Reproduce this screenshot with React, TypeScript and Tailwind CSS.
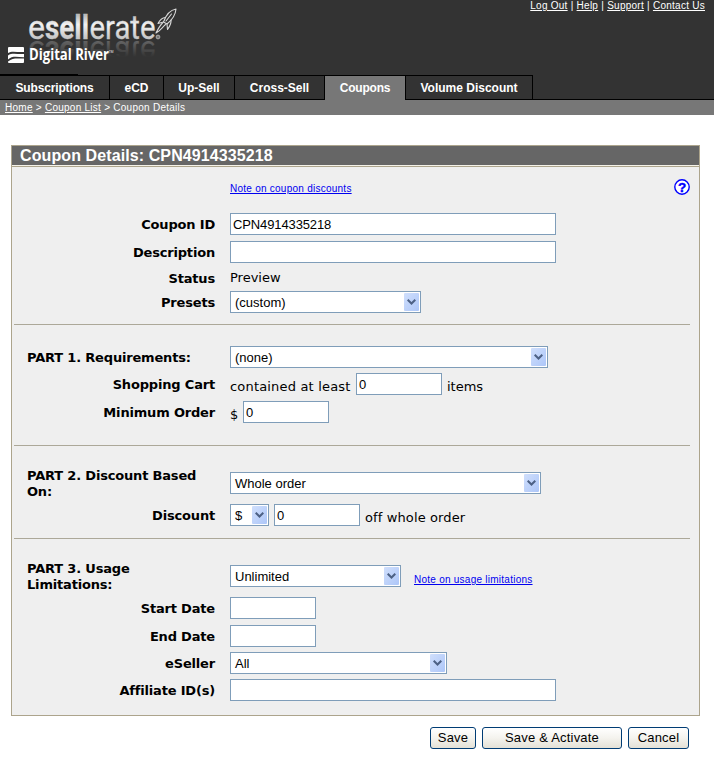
import type { ReactNode } from "react";

const VERDANA = "font-['DejaVu_Sans',sans-serif]";
const ARIAL = "font-['Liberation_Sans',sans-serif]";

function Wordmark() {
  return (
    <>
      <text x="28" y="39" textLength="17" lengthAdjust="spacingAndGlyphs">e</text>
      <text x="45" y="39" fontWeight="700" textLength="44" lengthAdjust="spacingAndGlyphs">sell</text>
      <text x="89.500" y="39" textLength="66" lengthAdjust="spacingAndGlyphs">erate</text>
    </>
  );
}

function Logo() {
  return (
    <svg width="190" height="74" viewBox="0 0 190 74" className="block" role="img" aria-label="esellerate, Digital River">
      <defs>
        <linearGradient id="silver" gradientUnits="userSpaceOnUse" x1="0" y1="15" x2="0" y2="39">
          <stop offset="0" stopColor="#b9b9b9" />
          <stop offset="0.4" stopColor="#f2f2f2" />
          <stop offset="1" stopColor="#c4c4c4" />
        </linearGradient>
        <linearGradient id="mirror" gradientUnits="userSpaceOnUse" x1="0" y1="39" x2="0" y2="23">
          <stop offset="0" stopColor="#fff" stopOpacity="0.24" />
          <stop offset="1" stopColor="#fff" stopOpacity="0" />
        </linearGradient>
      </defs>
      <g fontFamily="Roboto, sans-serif" fontSize="33" fill="url(#silver)" stroke="url(#silver)" strokeWidth="0.3">
        <Wordmark />
      </g>
      <g fontFamily="Roboto, sans-serif" fontSize="33" fill="url(#mirror)" transform="matrix(1 0 0 -1 0 80)" aria-hidden="true">
        <Wordmark />
      </g>
      <circle cx="158" cy="37" r="1.9" fill="#777" stroke="#bbb" strokeWidth="0.8" />
      <g fill="none" stroke="#d8d8d8" strokeWidth="1.1" strokeLinejoin="round" strokeLinecap="round">
        <path d="M176 9 C170 10 166 15 163.5 22 L167 24 C172 20 175.500 15 176 9 Z" />
        <path d="M165.500 17.500 C161 18 159.500 20.500 158 23.500 L163.500 22" />
        <path d="M171 20 C171.500 24 169.500 26.500 167.500 29.500 L167 24" />
        <path d="M162.500 23 C160 25.500 158.500 28 156 33 C160.500 30.500 162 27.500 165.500 24.500" />
        <path d="M166 21 L171.500 14" />
      </g>
      <rect x="8" y="47" width="16" height="16" rx="1" fill="#fff" />
      <path d="M8 53 C12 50.500 17 52.500 24 52 L24 54 C17 54.500 12 52.500 8 55.500 Z M8 59.500 C12 55.500 17 57 24 57.200 L24 58.600 C17 58.500 13 57.500 8 61.500 Z" fill="#333" />
      <text x="29" y="60" fontFamily="'Open Sans', sans-serif" fontSize="15.5" fontWeight="700" fill="#fff" textLength="80" lengthAdjust="spacingAndGlyphs">Digital River</text>
      <text x="109" y="53" fontFamily="'Open Sans', sans-serif" fontSize="3" fill="#fff">TM</text>
    </svg>
  );
}

function TopLink({ children }: { children: ReactNode }) {
  return <a className="underline decoration-1 underline-offset-1">{children}</a>;
}

function Tab({ children, className }: { children: ReactNode; className: string }) {
  return (
    <div className={`flex h-[25px] shrink-0 items-center justify-center border-t border-r border-black whitespace-nowrap ${className}`}>
      {children}
    </div>
  );
}

function Row({ label, className, labelClass = "pr-[15px] text-right", children }: {
  label?: string;
  className: string;
  labelClass?: string;
  children?: ReactNode;
}) {
  return (
    <div className={`flex h-[22px] items-center ${className}`}>
      <div className={`w-[218px] shrink-0 pt-[2px] leading-4 font-bold tracking-[-0.18px] ${labelClass}`}>{label}</div>
      {children}
    </div>
  );
}

function Field({ value = "", className }: { value?: string; className: string }) {
  return (
    <input
      defaultValue={value}
      className={`h-[22px] shrink-0 border border-[#7f9db9] bg-white px-[2px] pt-px text-[13px] tracking-[-0.12px] outline-none ${ARIAL} ${className}`}
    />
  );
}

function Select({ value, className }: { value: string; className: string }) {
  return (
    <div className={`flex h-[22px] shrink-0 items-center justify-between border border-[#7f9db9] bg-white pr-px pl-1 ${ARIAL} ${className}`}>
      <span className="pt-[2px]">{value}</span>
      <span className="flex h-[18px] w-[15px] items-center justify-center rounded-[1px] bg-linear-to-br from-[#d0dffc] to-[#adc6f8]">
        <svg width="9" height="6" viewBox="0 0 9 6" fill="none" stroke="#4d6185" strokeWidth="2">
          <path d="M0.700 0.700 L4.500 4.500 L8.300 0.700" />
        </svg>
      </span>
    </div>
  );
}

function Rule({ className }: { className: string }) {
  return <div className={`mr-[9px] ml-[2px] h-px bg-[#aca899] ${className}`} />;
}

function NoteLink({ children, className }: { children: ReactNode; className: string }) {
  return <a className={`text-[10px] tracking-[0.25px] text-[#0000f0] underline ${ARIAL} ${className}`}>{children}</a>;
}

function PushButton({ children, className }: { children: ReactNode; className: string }) {
  return (
    <button className={`h-[22px] rounded-[3px] border border-[#003c74] bg-linear-to-b from-white via-[#f4f3ee] to-[#e4e1d6] pb-px text-[13px] leading-none tracking-[0.2px] ${className}`}>
      {children}
    </button>
  );
}

export default function App() {
  return (
    <div className={`h-[762px] w-[714px] overflow-hidden bg-white text-[13px] text-black ${VERDANA}`}>
      <header className="bg-[#333]">
        <div className="flex h-[74px] items-start justify-between">
          <Logo />
          <div className={`mr-[9px] text-[10px] leading-3 tracking-[0.26px] whitespace-nowrap text-white ${ARIAL}`}>
            <TopLink>Log Out</TopLink> | <TopLink>Help</TopLink> | <TopLink>Support</TopLink> | <TopLink>Contact Us</TopLink>
          </div>
        </div>
        <div className="h-px w-[78px] bg-black" />
        <nav className={`flex h-[25px] text-[12px] font-bold text-white ${ARIAL}`}>
          <Tab className="w-[110px] border-b tracking-[-0.15px]">Subscriptions</Tab>
          <Tab className="w-[54px] border-b">eCD</Tab>
          <Tab className="w-[71px] border-b">Up-Sell</Tab>
          <Tab className="w-[90px] border-b">Cross-Sell</Tab>
          <Tab className="w-[81px] bg-[#777] tracking-[-0.2px]">Coupons</Tab>
          <Tab className="w-[127px] border-b">Volume Discount</Tab>
          <div className="flex-1 border-b border-black" />
        </nav>
      </header>
      <div className={`h-[15px] bg-[#777] pl-[5px] text-[10px] leading-[15px] tracking-[0.26px] text-white ${ARIAL}`}>
        <TopLink>Home</TopLink> &gt; <TopLink>Coupon List</TopLink> &gt; Coupon Details
      </div>

      <main className="mt-[30px] ml-[11px] h-[571px] w-[689px] border border-[#aca48c] bg-[#efefef]">
        <h1 className={`h-[20px] border-b border-[#f5f2e8] bg-[#666] pl-2 text-[16px] leading-[19px] font-bold tracking-[0.1px] text-white ${ARIAL}`}>
          Coupon Details: CPN4914335218
        </h1>
        <div className="h-px bg-[#aca48c]" />
        <div className="flex h-[46px] items-center justify-between pr-[9px] pl-[218px]">
          <NoteLink className="pb-[3px]">Note on coupon discounts</NoteLink>
          <svg width="16" height="16" viewBox="0 0 16 16" className="mb-[6px]">
            <circle cx="8" cy="8" r="7.2" fill="#fff" stroke="#00f" strokeWidth="1.400" />
            <text x="8" y="12.800" textAnchor="middle" fontFamily="'Liberation Sans', sans-serif" fontSize="13.500" fontWeight="700" fill="#00f" stroke="#00f" strokeWidth="0.4">?</text>
          </svg>
        </div>

        <Row label="Coupon ID" className=""><Field value="CPN4914335218" className="w-[326px]" /></Row>
        <Row label="Description" className="mt-[6px]"><Field className="w-[326px]" /></Row>
        <Row label="Status" labelClass="pr-[15px] pb-px text-right" className="mt-1">Preview</Row>
        <Row label="Presets" className="mt-[2px]"><Select value="(custom)" className="w-[191px]" /></Row>
        <Rule className="mt-[11px]" />

        <Row label="PART 1. Requirements:" labelClass="pl-[15px]" className="mt-[21px]"><Select value="(none)" className="w-[318px]" /></Row>
        <Row label="Shopping Cart" className="mt-[5px]">
          <span className="w-[126px] shrink-0 pt-[5px] tracking-[0.18px]">contained at least</span>
          <Field value="0" className="mr-[5px] w-[86px]" />
          <span className="pt-[5px]">items</span>
        </Row>
        <Row label="Minimum Order" className="mt-[6px]">
          <span className="w-[13px] pt-[5px]">$</span>
          <Field value="0" className="w-[86px]" />
        </Row>
        <Rule className="mt-[22px]" />

        <Row label="PART 2. Discount Based On:" labelClass="pl-[15px] pr-[20px]" className="mt-[26px]"><Select value="Whole order" className="w-[311px]" /></Row>
        <Row label="Discount" className="mt-[10px]">
          <Select value="$" className="mr-[5px] w-[39px]" />
          <Field value="0" className="mr-[5px] w-[86px]" />
          <span className="pt-[5px] tracking-[0.12px]">off whole order</span>
        </Row>
        <Rule className="mt-[12px]" />

        <Row label="PART 3. Usage Limitations:" labelClass="pl-[15px] pr-[70px]" className="mt-[26px]">
          <Select value="Unlimited" className="mr-[13px] w-[171px]" />
          <NoteLink className="pt-[7px]">Note on usage limitations</NoteLink>
        </Row>
        <Row label="Start Date" className="mt-[10px]"><Field className="w-[86px]" /></Row>
        <Row label="End Date" className="mt-[6px]"><Field className="w-[86px]" /></Row>
        <Row label="eSeller" className="mt-[5px]"><Select value="All" className="w-[217px]" /></Row>
        <Row label="Affiliate ID(s)" className="mt-[5px]"><Field className="w-[326px]" /></Row>
      </main>

      <footer className={`mt-[11px] flex pl-[430px] ${ARIAL}`}>
        <PushButton className="mr-[6px] w-[46px]">Save</PushButton>
        <PushButton className="mr-[6px] w-[140px]">Save &amp; Activate</PushButton>
        <PushButton className="w-[61px]">Cancel</PushButton>
      </footer>
    </div>
  );
}
